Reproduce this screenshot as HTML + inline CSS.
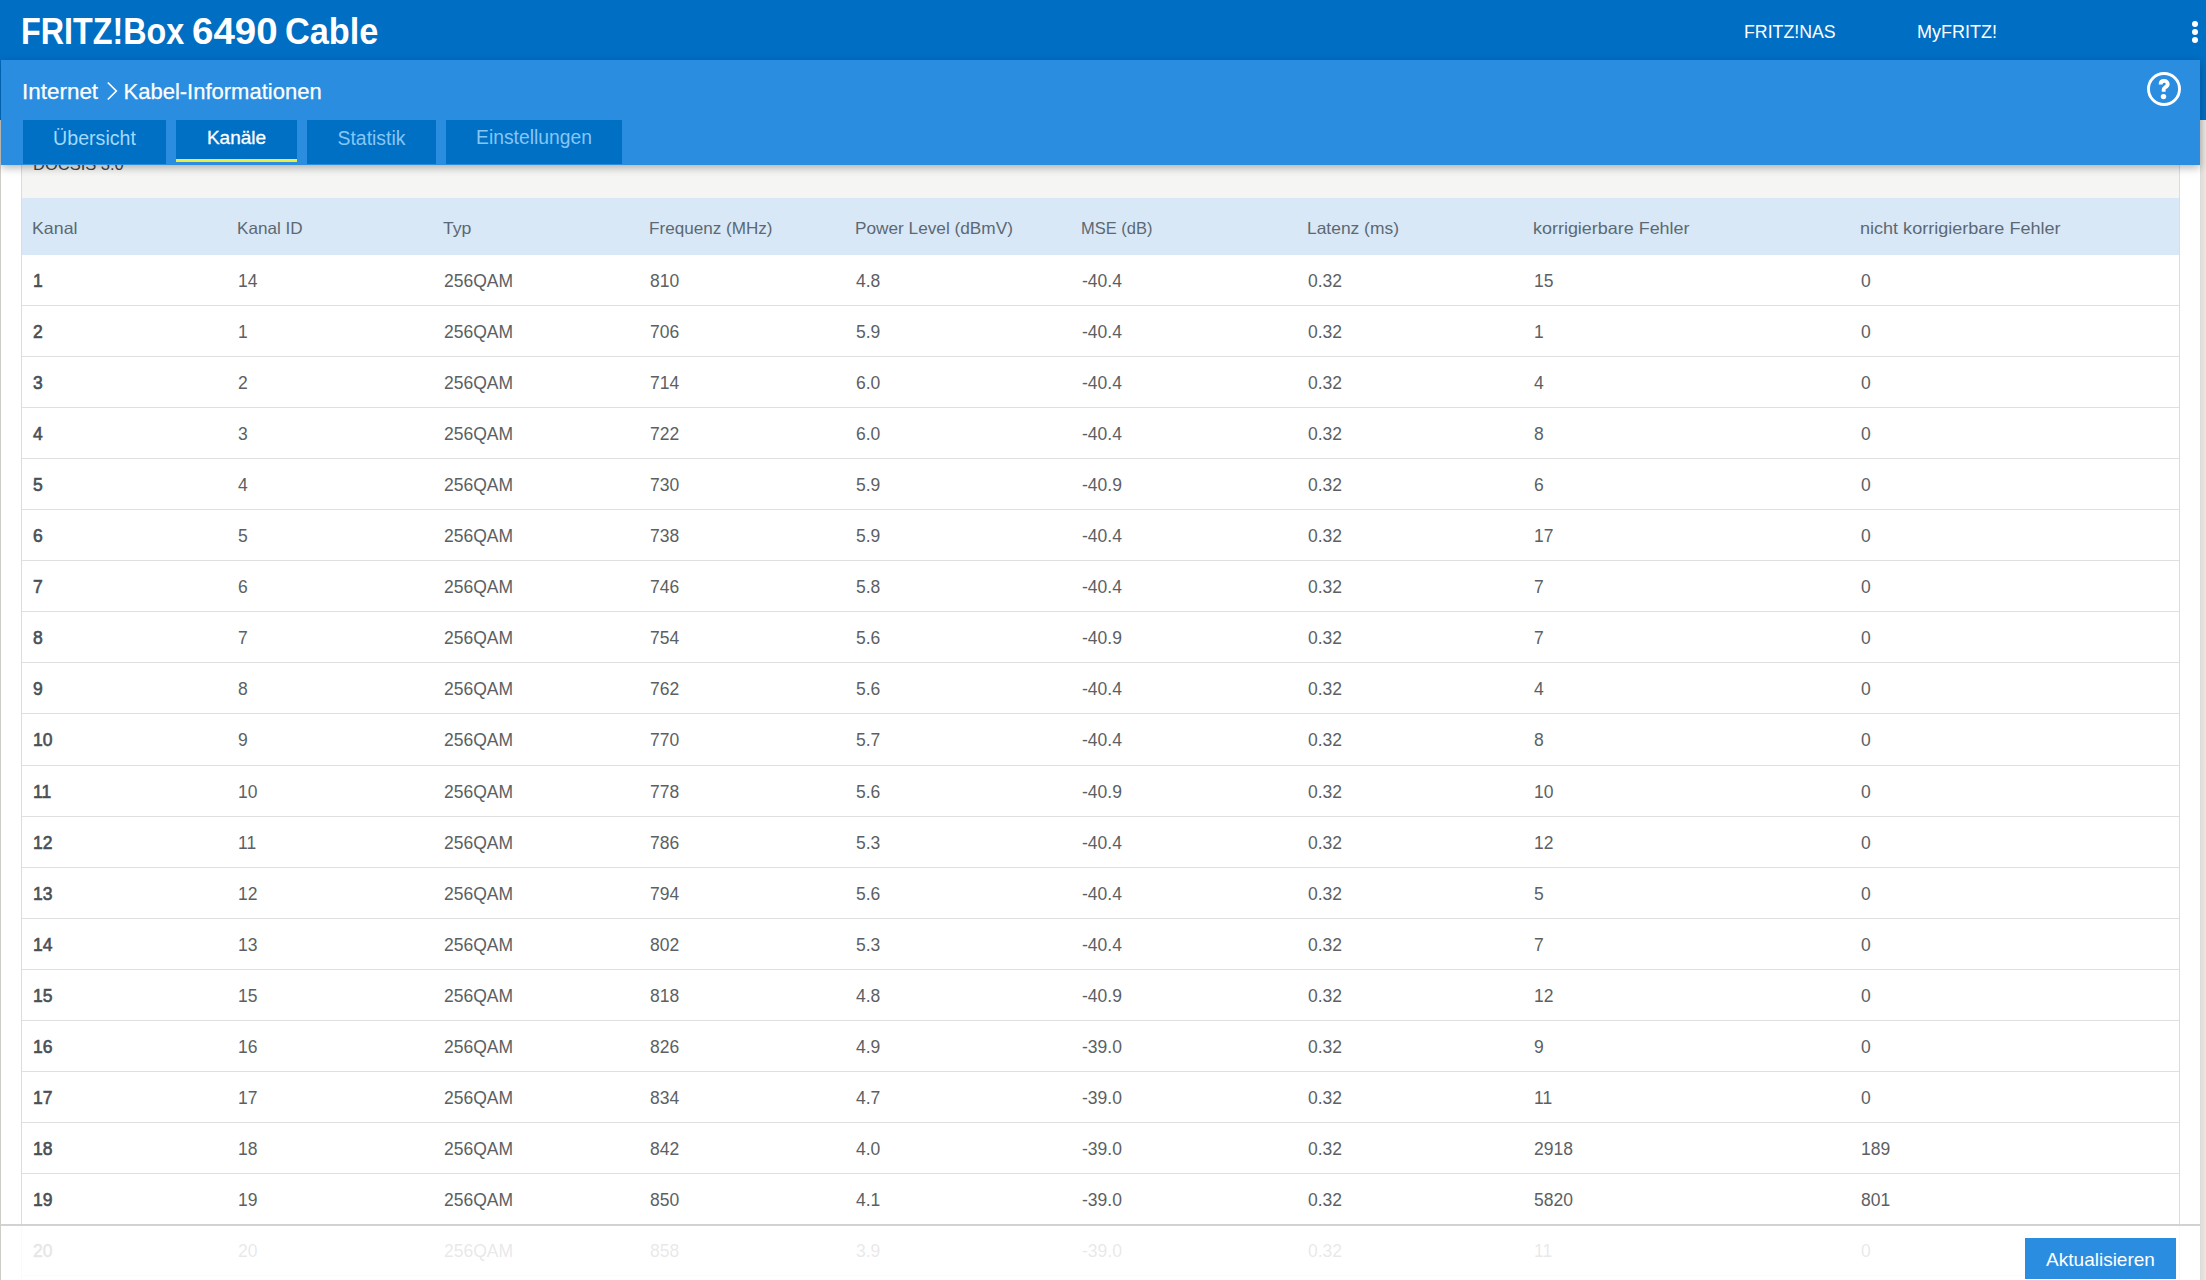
<!DOCTYPE html>
<html><head><meta charset="utf-8"><title>FRITZ!Box 6490 Cable</title>
<style>
*{box-sizing:border-box;margin:0;padding:0}
html,body{width:2206px;height:1280px;overflow:hidden;background:#fff;font-family:"Liberation Sans",sans-serif}
#top{position:absolute;left:0;top:0;width:2206px;height:120px;background:#006ec3}
.tw{position:absolute;top:12px;transform-origin:0 0;font-size:36px;font-weight:bold;color:#fff;line-height:40px;white-space:nowrap}
.toplink{position:absolute;top:21px;font-size:18px;color:#fff;line-height:22px;white-space:nowrap}
.dot{position:absolute;left:2192px;width:6px;height:6px;border-radius:50%;background:#fff}
#lstrip{position:absolute;left:0;top:120px;width:1px;height:1160px;background:#cfcdc9}
#rstrip{position:absolute;left:2200px;top:120px;width:6px;height:1160px;background:linear-gradient(to right,#dedbd6,#ebe8e3)}
#bar{position:absolute;left:1px;top:60px;width:2199px;height:105px;background:#2a8de0;box-shadow:0 3px 8px rgba(0,0,0,0.28);z-index:10}
.crumb{position:absolute;top:20px;font-size:22px;-webkit-text-stroke:0.25px #fff;color:#fff;line-height:24px;white-space:nowrap}
#help{position:absolute;left:2146px;top:12px}
.tab{position:absolute;top:60px;height:44px;background:#0070c5;color:#a3d9fb;font-size:19px;line-height:22px;text-align:center;padding-top:7px;white-space:nowrap}
.tab.act{color:#fff;font-size:19px;-webkit-text-stroke:0.3px #fff;height:42px;border-bottom:3px solid #f0ec3a}
.tab.dim{color:#86c6f5}
#box{position:absolute;left:21px;top:120px;width:2159px;height:1160px;border-left:1px solid #dcdcdc;border-right:1px solid #dcdcdc}
#docsis{position:absolute;left:0;top:0;width:2157px;height:78px;background:#f5f5f3}
#docsis span{position:absolute;left:11px;top:33px;font-size:16.5px;color:#444;line-height:22px}
#thead{position:absolute;left:0;top:78px;width:2157px;height:57px;background:#d8e8f6}
.c{position:absolute;white-space:nowrap;transform-origin:0 0;font-size:17.5px;color:#5c5f64;line-height:20px}
#thead .c{top:20px;color:#5c6873;font-size:16.5px}
.row{position:absolute;left:0;width:2157px;border-bottom:1px solid #e0e0e0}
.row .c{top:16px}
.c.b{font-weight:normal;-webkit-text-stroke:0.6px #4a4f55;color:#4a4f55}
#rows{position:absolute;left:0;top:78px;width:2157px}
#foot{position:absolute;left:1px;top:1224px;width:2199px;height:56px;background:rgba(255,255,255,0.86);border-top:2px solid #d2d2d2;z-index:5}
#btn{position:absolute;left:2024px;top:12px;width:151px;height:41px;background:#2a8de0;color:#fff;font-size:19px;line-height:22px;text-align:center;padding-top:11px}
</style></head><body>
<div id="top">
  <div class="tw" style="left:21px;transform:scaleX(0.897)">FRITZ!Box</div><div class="tw" style="left:192px;transform:scaleX(1.069)">6490</div><div class="tw" style="left:285px;transform:scaleX(0.953)">Cable</div>
  <div class="toplink" style="left:1744px;transform:scaleX(0.985);transform-origin:0 0">FRITZ!NAS</div>
  <div class="toplink" style="left:1917px">MyFRITZ!</div>
  <div class="dot" style="top:21px"></div>
  <div class="dot" style="top:29px"></div>
  <div class="dot" style="top:37px"></div>
</div>
<div id="lstrip"></div>
<div id="rstrip"></div>
<div id="box">
  <div id="docsis"><span>DOCSIS 3.0</span></div>
  <div id="rows">
  <div id="thead" style="top:0"><span class="c" style="left:10px;transform:scaleX(1.0775757575757576)">Kanal</span><span class="c" style="left:215px;transform:scaleX(1.0362121212121211)">Kanal ID</span><span class="c" style="left:421px;transform:scaleX(1.0680303030303029)">Typ</span><span class="c" style="left:627px;transform:scaleX(1.0362121212121211)">Frequenz (MHz)</span><span class="c" style="left:833px;transform:scaleX(1.0436363636363635)">Power Level (dBmV)</span><span class="c" style="left:1059px;transform:scaleX(0.999090909090909)">MSE (dB)</span><span class="c" style="left:1285px;transform:scaleX(1.0553030303030304)">Latenz (ms)</span><span class="c" style="left:1511px;transform:scaleX(1.0871212121212122)">korrigierbare Fehler</span><span class="c" style="left:1838px;transform:scaleX(1.0934848484848483)">nicht korrigierbare Fehler</span></div>
  <div class="row" style="top:57px;height:51px"><span class="c b" style="left:11px">1</span><span class="c" style="left:216px">14</span><span class="c" style="left:422px">256QAM</span><span class="c" style="left:628px">810</span><span class="c" style="left:834px">4.8</span><span class="c" style="left:1060px">-40.4</span><span class="c" style="left:1286px">0.32</span><span class="c" style="left:1512px">15</span><span class="c" style="left:1839px">0</span></div><div class="row" style="top:108px;height:51px"><span class="c b" style="left:11px">2</span><span class="c" style="left:216px">1</span><span class="c" style="left:422px">256QAM</span><span class="c" style="left:628px">706</span><span class="c" style="left:834px">5.9</span><span class="c" style="left:1060px">-40.4</span><span class="c" style="left:1286px">0.32</span><span class="c" style="left:1512px">1</span><span class="c" style="left:1839px">0</span></div><div class="row" style="top:159px;height:51px"><span class="c b" style="left:11px">3</span><span class="c" style="left:216px">2</span><span class="c" style="left:422px">256QAM</span><span class="c" style="left:628px">714</span><span class="c" style="left:834px">6.0</span><span class="c" style="left:1060px">-40.4</span><span class="c" style="left:1286px">0.32</span><span class="c" style="left:1512px">4</span><span class="c" style="left:1839px">0</span></div><div class="row" style="top:210px;height:51px"><span class="c b" style="left:11px">4</span><span class="c" style="left:216px">3</span><span class="c" style="left:422px">256QAM</span><span class="c" style="left:628px">722</span><span class="c" style="left:834px">6.0</span><span class="c" style="left:1060px">-40.4</span><span class="c" style="left:1286px">0.32</span><span class="c" style="left:1512px">8</span><span class="c" style="left:1839px">0</span></div><div class="row" style="top:261px;height:51px"><span class="c b" style="left:11px">5</span><span class="c" style="left:216px">4</span><span class="c" style="left:422px">256QAM</span><span class="c" style="left:628px">730</span><span class="c" style="left:834px">5.9</span><span class="c" style="left:1060px">-40.9</span><span class="c" style="left:1286px">0.32</span><span class="c" style="left:1512px">6</span><span class="c" style="left:1839px">0</span></div><div class="row" style="top:312px;height:51px"><span class="c b" style="left:11px">6</span><span class="c" style="left:216px">5</span><span class="c" style="left:422px">256QAM</span><span class="c" style="left:628px">738</span><span class="c" style="left:834px">5.9</span><span class="c" style="left:1060px">-40.4</span><span class="c" style="left:1286px">0.32</span><span class="c" style="left:1512px">17</span><span class="c" style="left:1839px">0</span></div><div class="row" style="top:363px;height:51px"><span class="c b" style="left:11px">7</span><span class="c" style="left:216px">6</span><span class="c" style="left:422px">256QAM</span><span class="c" style="left:628px">746</span><span class="c" style="left:834px">5.8</span><span class="c" style="left:1060px">-40.4</span><span class="c" style="left:1286px">0.32</span><span class="c" style="left:1512px">7</span><span class="c" style="left:1839px">0</span></div><div class="row" style="top:414px;height:51px"><span class="c b" style="left:11px">8</span><span class="c" style="left:216px">7</span><span class="c" style="left:422px">256QAM</span><span class="c" style="left:628px">754</span><span class="c" style="left:834px">5.6</span><span class="c" style="left:1060px">-40.9</span><span class="c" style="left:1286px">0.32</span><span class="c" style="left:1512px">7</span><span class="c" style="left:1839px">0</span></div><div class="row" style="top:465px;height:51px"><span class="c b" style="left:11px">9</span><span class="c" style="left:216px">8</span><span class="c" style="left:422px">256QAM</span><span class="c" style="left:628px">762</span><span class="c" style="left:834px">5.6</span><span class="c" style="left:1060px">-40.4</span><span class="c" style="left:1286px">0.32</span><span class="c" style="left:1512px">4</span><span class="c" style="left:1839px">0</span></div><div class="row" style="top:516px;height:52px"><span class="c b" style="left:11px">10</span><span class="c" style="left:216px">9</span><span class="c" style="left:422px">256QAM</span><span class="c" style="left:628px">770</span><span class="c" style="left:834px">5.7</span><span class="c" style="left:1060px">-40.4</span><span class="c" style="left:1286px">0.32</span><span class="c" style="left:1512px">8</span><span class="c" style="left:1839px">0</span></div><div class="row" style="top:568px;height:51px"><span class="c b" style="left:11px">11</span><span class="c" style="left:216px">10</span><span class="c" style="left:422px">256QAM</span><span class="c" style="left:628px">778</span><span class="c" style="left:834px">5.6</span><span class="c" style="left:1060px">-40.9</span><span class="c" style="left:1286px">0.32</span><span class="c" style="left:1512px">10</span><span class="c" style="left:1839px">0</span></div><div class="row" style="top:619px;height:51px"><span class="c b" style="left:11px">12</span><span class="c" style="left:216px">11</span><span class="c" style="left:422px">256QAM</span><span class="c" style="left:628px">786</span><span class="c" style="left:834px">5.3</span><span class="c" style="left:1060px">-40.4</span><span class="c" style="left:1286px">0.32</span><span class="c" style="left:1512px">12</span><span class="c" style="left:1839px">0</span></div><div class="row" style="top:670px;height:51px"><span class="c b" style="left:11px">13</span><span class="c" style="left:216px">12</span><span class="c" style="left:422px">256QAM</span><span class="c" style="left:628px">794</span><span class="c" style="left:834px">5.6</span><span class="c" style="left:1060px">-40.4</span><span class="c" style="left:1286px">0.32</span><span class="c" style="left:1512px">5</span><span class="c" style="left:1839px">0</span></div><div class="row" style="top:721px;height:51px"><span class="c b" style="left:11px">14</span><span class="c" style="left:216px">13</span><span class="c" style="left:422px">256QAM</span><span class="c" style="left:628px">802</span><span class="c" style="left:834px">5.3</span><span class="c" style="left:1060px">-40.4</span><span class="c" style="left:1286px">0.32</span><span class="c" style="left:1512px">7</span><span class="c" style="left:1839px">0</span></div><div class="row" style="top:772px;height:51px"><span class="c b" style="left:11px">15</span><span class="c" style="left:216px">15</span><span class="c" style="left:422px">256QAM</span><span class="c" style="left:628px">818</span><span class="c" style="left:834px">4.8</span><span class="c" style="left:1060px">-40.9</span><span class="c" style="left:1286px">0.32</span><span class="c" style="left:1512px">12</span><span class="c" style="left:1839px">0</span></div><div class="row" style="top:823px;height:51px"><span class="c b" style="left:11px">16</span><span class="c" style="left:216px">16</span><span class="c" style="left:422px">256QAM</span><span class="c" style="left:628px">826</span><span class="c" style="left:834px">4.9</span><span class="c" style="left:1060px">-39.0</span><span class="c" style="left:1286px">0.32</span><span class="c" style="left:1512px">9</span><span class="c" style="left:1839px">0</span></div><div class="row" style="top:874px;height:51px"><span class="c b" style="left:11px">17</span><span class="c" style="left:216px">17</span><span class="c" style="left:422px">256QAM</span><span class="c" style="left:628px">834</span><span class="c" style="left:834px">4.7</span><span class="c" style="left:1060px">-39.0</span><span class="c" style="left:1286px">0.32</span><span class="c" style="left:1512px">11</span><span class="c" style="left:1839px">0</span></div><div class="row" style="top:925px;height:51px"><span class="c b" style="left:11px">18</span><span class="c" style="left:216px">18</span><span class="c" style="left:422px">256QAM</span><span class="c" style="left:628px">842</span><span class="c" style="left:834px">4.0</span><span class="c" style="left:1060px">-39.0</span><span class="c" style="left:1286px">0.32</span><span class="c" style="left:1512px">2918</span><span class="c" style="left:1839px">189</span></div><div class="row" style="top:976px;height:51px"><span class="c b" style="left:11px">19</span><span class="c" style="left:216px">19</span><span class="c" style="left:422px">256QAM</span><span class="c" style="left:628px">850</span><span class="c" style="left:834px">4.1</span><span class="c" style="left:1060px">-39.0</span><span class="c" style="left:1286px">0.32</span><span class="c" style="left:1512px">5820</span><span class="c" style="left:1839px">801</span></div><div class="row" style="top:1027px;height:51px"><span class="c b" style="left:11px">20</span><span class="c" style="left:216px">20</span><span class="c" style="left:422px">256QAM</span><span class="c" style="left:628px">858</span><span class="c" style="left:834px">3.9</span><span class="c" style="left:1060px">-39.0</span><span class="c" style="left:1286px">0.32</span><span class="c" style="left:1512px">11</span><span class="c" style="left:1839px">0</span></div>
  </div>
</div>
<div id="bar">
  <div class="crumb" style="left:21px;transform:scaleX(1.02);transform-origin:0 0">Internet</div><svg style="position:absolute;left:106px;top:22px" width="12" height="18" viewBox="0 0 12 18"><path d="M1.3 1 L9.3 9 L1.3 17" fill="none" stroke="#fff" stroke-width="1.7" stroke-linecap="round"/></svg><div class="crumb" style="left:122.5px">Kabel-Informationen</div>
  <svg id="help" width="34" height="34" viewBox="0 0 34 34"><circle cx="17" cy="17" r="15.5" fill="none" stroke="#fff" stroke-width="2.9"/><path d="M13.6 12.4 C13.6 10.1 15.1 8.9 17.1 8.9 C19.2 8.9 20.7 10.3 20.7 12.1 C20.7 13.9 19.6 14.6 18.2 15.4 C17 16.1 16.7 16.6 16.7 17.6 L16.7 19.8" fill="none" stroke="#fff" stroke-width="3.9" stroke-linecap="butt"/><circle cx="16.5" cy="24.6" r="2.7" fill="#fff"/></svg>
  <div class="tab" style="left:22px;width:143px;font-size:19.6px">Übersicht</div>
  <div class="tab act" style="left:175px;width:121px">Kanäle</div>
  <div class="tab dim" style="left:306px;width:129px;font-size:19.4px">Statistik</div>
  <div class="tab dim" style="left:445px;width:176px;font-size:19.3px">Einstellungen</div>
</div>
<div id="foot"><div id="btn">Aktualisieren</div></div>
</body></html>
